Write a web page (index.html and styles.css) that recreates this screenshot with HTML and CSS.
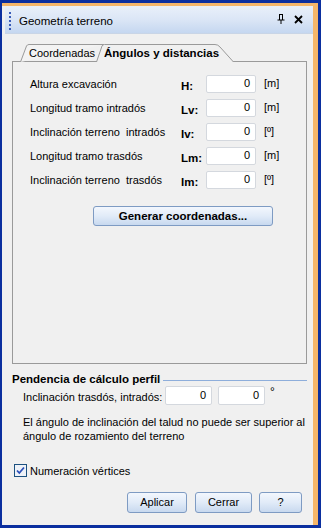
FILE: index.html
```html
<!DOCTYPE html>
<html lang="es">
<head>
<meta charset="utf-8">
<title>Geometría terreno</title>
<link rel="stylesheet" href="styles.css">
</head>
<body>
<div class="frame">
  <div class="win">
    <div class="titlebar">
      <span class="grip"></span>
      <span class="title">Geometría terreno</span>
      <span class="tb-icons">
        <svg class="pin" width="8" height="10" viewBox="0 0 8 10"><path d="M2 0.5H6M2.5 0.5V6M5.5 0.5V6M0.5 6H7.5M4 6V10" stroke="#000" stroke-width="1" fill="none"/></svg>
        <svg class="close" width="9" height="9" viewBox="0 0 9 9"><path d="M1 1L8 8M8 1L1 8" stroke="#000" stroke-width="1.8" fill="none"/></svg>
      </span>
    </div>
    <div class="content">
      <div class="tabs">
        <div class="tab tab-a">
          <svg class="tab-shape" width="84" height="18" viewBox="0 0 84 18"><path d="M0.5 18L6.5 2Q7.3 0.5 9 0.5H84" fill="#f3f3f3" stroke="#9a9a9a"/></svg>
          <span class="tab-label">Coordenadas</span>
        </div>
        <div class="tab tab-b">
          <svg class="tab-shape" width="139" height="19" viewBox="0 0 139 19"><path d="M0.5 19V18L6 2Q6.8 0.5 8.5 0.5H119Q122 0.5 124 3L137.5 18V19Z" fill="#f0f0f0"/><path d="M0.5 18L6 2Q6.8 0.5 8.5 0.5H119Q122 0.5 124 3L137.5 18" fill="none" stroke="#9a9a9a"/></svg>
          <span class="tab-label">Ángulos y distancias</span>
        </div>
      </div>
      <div class="panel">
        <div class="fields">
          <span class="lbl">Altura excavación</span><b class="code">H:</b><span class="input">0</span><span class="unit">[m]</span>
          <span class="lbl">Longitud tramo intradós</span><b class="code">Lv:</b><span class="input">0</span><span class="unit">[m]</span>
          <span class="lbl">Inclinación terreno&nbsp; intradós</span><b class="code">Iv:</b><span class="input">0</span><span class="unit">[º]</span>
          <span class="lbl">Longitud tramo trasdós</span><b class="code">Lm:</b><span class="input">0</span><span class="unit">[m]</span>
          <span class="lbl">Inclinación terreno&nbsp; trasdós</span><b class="code">Im:</b><span class="input">0</span><span class="unit">[º]</span>
        </div>
        <div class="btn gen">Generar coordenadas...</div>
      </div>
      <div class="sec-head"><span class="sec-title">Pendencia de cálculo perfil</span><span class="sec-line"></span></div>
      <div class="incl-row">
        <span class="incl-lbl">Inclinación trasdós, intradós:</span>
        <span class="input small">0</span>
        <span class="input small">0</span>
        <span class="deg">°</span>
      </div>
      <p class="note">El ángulo de inclinación del talud no puede ser superior al<br>ángulo de rozamiento del terreno</p>
      <div class="check">
        <svg class="box" width="13" height="13" viewBox="0 0 13 13"><rect x="0.5" y="0.5" width="12" height="12" fill="#eef2f8" stroke="#1c5180"/><path d="M3 6.5L5.3 9L10 3.5" stroke="#2a4fb8" stroke-width="1.8" fill="none"/></svg>
        <span>Numeración vértices</span>
      </div>
      <div class="actions">
        <div class="btn w-apl">Aplicar</div>
        <div class="btn w-cer">Cerrar</div>
        <div class="btn w-q">?</div>
      </div>
    </div>
  </div>
</div>
</body>
</html>
```
FILE: styles.css
```css
html, body {
  margin: 0;
  padding: 0;
}
body {
  background: #0b2f9f;
  width: 321px;
  height: 528px;
  overflow: hidden;
  font-family: "Liberation Sans", Arial, sans-serif;
  font-size: 11px;
  color: #000;
}
.frame {
  padding: 3px 3px 3px 2px;
  height: 528px;
  box-sizing: border-box;
}
.win {
  height: 100%;
  box-sizing: border-box;
  background: #f0f0f0;
  border-top: 3px solid #f5b66a;
  border-right: 5px solid #f5b66a;
}
.titlebar {
  height: 28px;
  margin-left: 3px;
  display: flex;
  align-items: center;
  background: linear-gradient(#e9f0fa, #dbe6f6 50%, #c5d7f0);
  border-bottom: 1px solid #c9d5e6;
  box-sizing: border-box;
}
.grip {
  width: 2px;
  height: 20px;
  margin-left: 4px;
  margin-top: 4px;
  background: repeating-linear-gradient(#3a5cb8 0 2px, transparent 2px 4px);
}
.title {
  margin-left: 8px;
  font-size: 11.5px;
  flex: 1;
  padding-top: 2px;
}
.tb-icons {
  display: flex;
  align-items: center;
  gap: 9px;
  margin-right: 10px;
}
.pin { margin-top: -1px; }
.content {
  padding: 10px 0 0 10px;
}
.tabs {
  display: flex;
  padding-left: 8px;
  height: 18px;
  margin-bottom: -1px;
  position: relative;
  z-index: 1;
}
.tab {
  position: relative;
  height: 18px;
}
.tab-shape {
  position: absolute;
  left: 0;
  top: 0;
}
.tab-label {
  position: relative;
  display: block;
  line-height: 19px;
}
.tab-a { width: 84px; }
.tab-a .tab-label { padding-left: 9px; }
.tab-b { width: 139px; margin-left: -8px; height: 19px; }
.tab-b .tab-label { padding-left: 8px; font-weight: bold; font-size: 11.5px; }
.panel {
  width: 295px;
  height: 303px;
  box-sizing: border-box;
  border: 1px solid #9a9a9a;
  padding: 13px 0 0 17px;
}
.fields {
  display: grid;
  grid-template-columns: 151px 25px 50px auto;
  grid-auto-rows: 18px;
  row-gap: 6px;
  align-items: center;
}
.code { font-weight: bold; font-size: 11.5px; padding-top: 3px; }
.input {
  height: 18px;
  box-sizing: border-box;
  background: #fff;
  border: 1px solid #d4d8de;
  border-radius: 2px;
  text-align: right;
  padding-right: 5px;
  line-height: 15px;
}
.unit { margin-left: 8px; margin-top: -3px; }
.btn {
  box-sizing: border-box;
  border: 1px solid #7e9bc3;
  border-radius: 3px;
  background: linear-gradient(#f3f7fd, #e1ebf8 50%, #c8d9ef);
  text-align: center;
}
.gen {
  margin: 17px 0 0 63px;
  width: 180px;
  height: 20px;
  line-height: 18px;
  font-weight: bold;
  font-size: 11.5px;
}
.sec-head {
  display: flex;
  align-items: center;
  margin-top: 8px;
  height: 14px;
}
.sec-title {
  font-weight: bold;
  font-size: 11.5px;
}
.sec-line {
  flex: 1;
  height: 1px;
  background: #8eaedb;
  margin: 2px 6px 0 3px;
}
.incl-row {
  display: flex;
  align-items: center;
  padding-left: 11px;
  height: 19px;
  margin-top: 0;
}
.incl-lbl { width: 142px; padding-top: 3px; }
.input.small { width: 47px; height: 19px; line-height: 16px; margin-right: 6px; }
.deg { margin-left: -1px; margin-top: -8px; font-size: 12px; }
.note {
  margin: 10px 0 0 11px;
  line-height: 14px;
}
.check {
  display: flex;
  align-items: center;
  gap: 3px;
  margin: 21px 0 0 2px;
  height: 14px;
}
.check .box { margin-top: -1px; }
.actions {
  display: flex;
  justify-content: flex-end;
  gap: 7px;
  margin: 14px 11px 0 0;
}
.actions .btn {
  height: 21px;
  line-height: 19px;
}
.w-apl { width: 60px; margin-right: 1px; }
.w-cer { width: 57px; }
.w-q { width: 43px; }
```
